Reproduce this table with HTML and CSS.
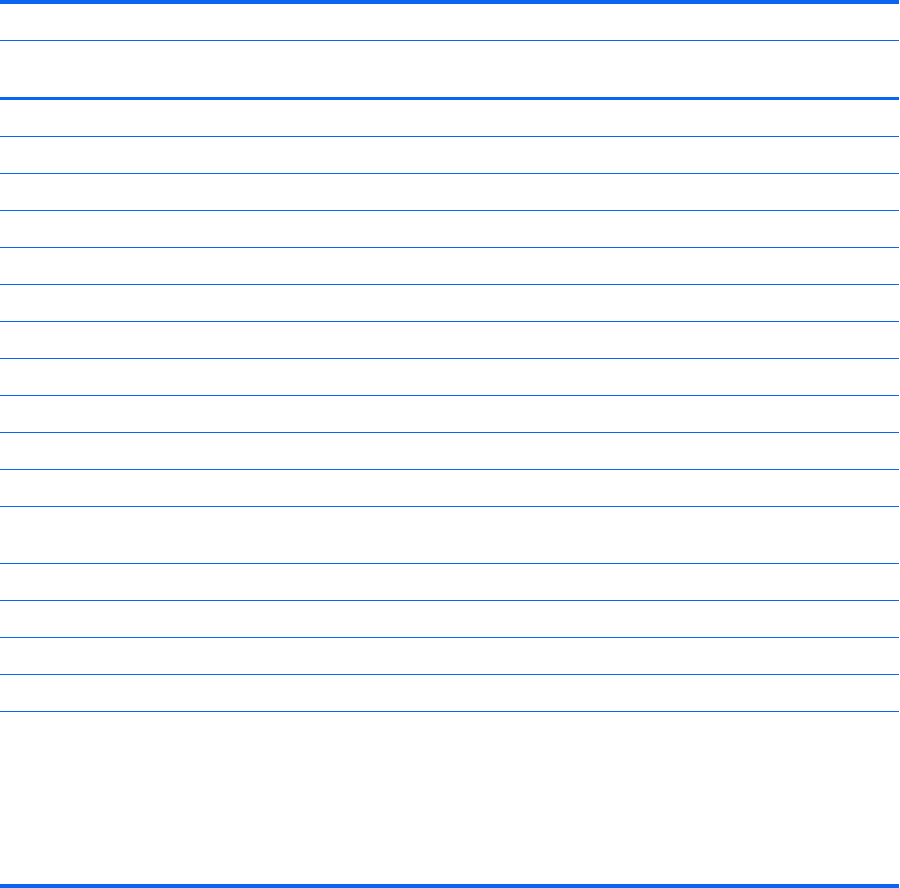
FILE: index.html
```html
<!DOCTYPE html>
<html>
<head>
<meta charset="utf-8">
<link rel="stylesheet" href="styles.css">
</head>
<body>
<div class="sheet">
  <div class="head-row short"></div>
  <div class="head-row tall"></div>
  <div class="row"></div>
  <div class="row"></div>
  <div class="row"></div>
  <div class="row"></div>
  <div class="row"></div>
  <div class="row"></div>
  <div class="row"></div>
  <div class="row"></div>
  <div class="row"></div>
  <div class="row"></div>
  <div class="row"></div>
  <div class="row double"></div>
  <div class="row"></div>
  <div class="row"></div>
  <div class="row"></div>
  <div class="row"></div>
  <div class="foot"></div>
</div>
</body>
</html>
```
FILE: styles.css
```css
html, body {
  margin: 0;
  padding: 0;
  background: #ffffff;
  font-family: "Liberation Sans", Arial, sans-serif;
}
.sheet {
  width: 899px;
  display: flex;
  flex-direction: column;
  border-top: 4px solid #0a66f0;
}
.head-row.short {
  height: 36px;
  border-bottom: 1px solid #0a66f0;
}
.head-row.tall {
  height: 56px;
  border-bottom: 3px solid #0a66f0;
}
.row {
  height: 36px;
  border-bottom: 1px solid #0a66f0;
}
.row.double {
  height: 56px;
}
.foot {
  height: 172px;
  border-bottom: 4px solid #0a66f0;
}
```
